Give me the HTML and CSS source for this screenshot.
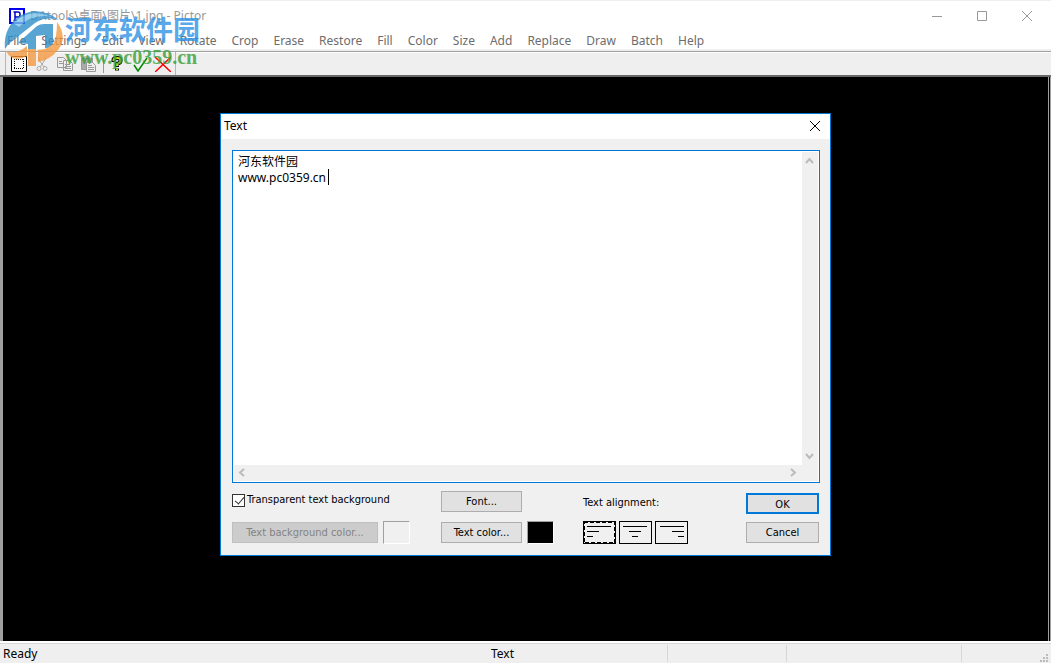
FILE: index.html
```html
<!DOCTYPE html>
<html lang="en">
<head>
    <meta charset="UTF-8">
    <title>Pictor</title>
    <link rel="stylesheet" href="styles.css">
</head>
<body>
    <header class="titlebar">
        <svg class="app-icon" width="16" height="16" viewBox="0 0 16 16">
            <rect x="1" y="1" width="14" height="14" fill="#fff" stroke="#00e" stroke-width="2"/>
            <path d="M6 13V4h3q2 0 2 2v1q0 2-2 2H6M4.500 4H7M4.500 12.500H8" fill="none" stroke="#00c" stroke-width="1.500"/>
        </svg>
        <h1>D:\tools\桌面\图片\1.jpg - Pictor</h1>
        <div class="window-buttons">
            <button aria-label="Minimize"><svg width="12" height="12"><path d="M1 6.500h10"/></svg></button>
            <button aria-label="Maximize"><svg width="12" height="12"><path d="M1.500 1.500h9v9h-9z"/></svg></button>
            <button aria-label="Close"><svg width="12" height="12"><path d="M1 1l10 10M11 1L1 11"/></svg></button>
        </div>
    </header>

    <nav class="menu">
        <button>File</button>
        <button>Settings</button>
        <button>Edit</button>
        <button>View</button>
        <button>Rotate</button>
        <button>Crop</button>
        <button>Erase</button>
        <button>Restore</button>
        <button>Fill</button>
        <button>Color</button>
        <button>Size</button>
        <button>Add</button>
        <button>Replace</button>
        <button>Draw</button>
        <button>Batch</button>
        <button>Help</button>
    </nav>

    <div class="toolbar">
        <div class="tools">
            <button aria-label="Select">
                <svg width="16" height="16"><path d="M.5.5h15v15H.5z" fill="#fff" stroke="#000"/><path d="M3 3.500h10M3 12.500h10M3.500 3v10M12.500 3v10" stroke="#000" stroke-dasharray="1 1"/></svg>
            </button>
            <button aria-label="Cut">
                <svg width="16" height="16" fill="none" stroke="#aaa"><path d="M5 1v3l5 7M11 1v3l-5 7"/><circle cx="5" cy="12.500" r="2"/><circle cx="11" cy="12.500" r="2"/></svg>
            </button>
            <button aria-label="Copy">
                <svg width="16" height="16" fill="#eee" stroke="#999"><path d="M.5 1.500h6l3 3v7h-9zM6.500 4.500h6l3 3v7h-9z"/><path d="M2 5.500h3M2 7.500h4M8 8.500h5M8 10.500h6M8 12.500h6"/></svg>
            </button>
            <button aria-label="Paste">
                <svg width="16" height="16" stroke="#999"><path d="M1.500 2.500h11v11h-11z" fill="#aaa"/><path d="M4 2.500h6V1H4z" fill="#eee"/><path d="M6.500 6.500h6l3 3v6h-9z" fill="#eee"/><path d="M8 9.500h4M8 11.500h6M8 13.500h6"/></svg>
            </button>
            <span class="separator"></span>
            <button aria-label="Help">
                <svg width="16" height="16" fill="none"><path d="M4.500 6V4Q4.500 2 8 2t3.500 2v1Q11.500 7 8 8v3M8 12.500v2" stroke="#000" stroke-width="4"/><path d="M4.500 5V4Q4.500 2 8 2t3.500 2v1Q11.500 7 8 8v2M8 12.500v1.500" stroke="#d8d820" stroke-width="2"/></svg>
            </button>
            <button aria-label="Apply">
                <svg width="16" height="16"><path d="M2 9l4 6L15 2" fill="none" stroke="#080" stroke-width="1.500"/></svg>
            </button>
            <button aria-label="Discard">
                <svg width="16" height="16"><path d="M0 1l16 15M16 1L0 16" stroke="#f00" stroke-width="1.500"/></svg>
            </button>
        </div>
    </div>

    <main class="canvas">
        <section class="dialog" role="dialog" aria-labelledby="dialog-title">
            <div class="dialog-title">
                <h2 id="dialog-title">Text</h2>
                <button aria-label="Close dialog"><svg width="12" height="12"><path d="M1 1l10 10M11 1L1 11"/></svg></button>
            </div>
            <div class="dialog-body">
                <div class="editor">
                    <textarea aria-label="Text" spellcheck="false">河东软件园
www.pc0359.cn</textarea>
                    <div class="scroll-v">
                        <svg width="9" height="8"><path d="M1 6l3.500-4L8 6"/></svg>
                        <svg width="9" height="8"><path d="M1 2l3.500 4L8 2"/></svg>
                    </div>
                    <div class="scroll-h">
                        <svg width="8" height="9"><path d="M6 1L2 4.500 6 8"/></svg>
                        <svg width="8" height="9"><path d="M2 1l4 3.500L2 8"/></svg>
                    </div>
                    <span class="caret"></span>
                </div>
                <div class="options">
                    <div class="group">
                        <label class="check"><input type="checkbox" checked>Transparent text background</label>
                        <div class="row">
                            <button class="btn wide" disabled>Text background color...</button>
                            <span class="swatch"></span>
                        </div>
                    </div>
                    <div class="group">
                        <button class="btn">Font...</button>
                        <div class="row">
                            <button class="btn">Text color...</button>
                            <span class="swatch black"></span>
                        </div>
                    </div>
                    <div class="group">
                        <span class="caption">Text alignment:</span>
                        <div class="row align">
                            <button class="selected" aria-label="Left"><svg width="33" height="23"><rect class="focus" x="1" y="1" width="31" height="21"/><path d="M4 5.500h24M4 10.500h12M4 15.500h6"/></svg></button>
                            <button aria-label="Center"><svg width="33" height="23"><path d="M4 5.500h24M10 10.500h12M13 15.500h6"/></svg></button>
                            <button aria-label="Right"><svg width="33" height="23"><path d="M5 5.500h24M17 10.500h12M23 15.500h6"/></svg></button>
                        </div>
                    </div>
                    <div class="group actions">
                        <button class="btn default">OK</button>
                        <button class="btn">Cancel</button>
                    </div>
                </div>
            </div>
        </section>
    </main>

    <footer class="status">
        <span>Ready</span>
        <span>Text</span>
        <span class="cell"></span>
        <span class="cell"></span>
        <span class="cell">
            <svg width="8" height="8" fill="#bbb"><path d="M6 0h2v2H6zM3 3h2v2H3zM6 3h2v2H6zM0 6h2v2H0zM3 6h2v2H3zM6 6h2v2H6z"/></svg>
        </span>
    </footer>

    <div class="watermark">
        <svg width="60" height="58" viewBox="0 0 60 58">
            <path d="M1 40Q-1 20 14 8 34-5 55 11q-13-4-24 3L7 33q-4 3-6 7z" fill="#2f8fca"/>
            <path d="M9 14Q26-2 48 8 28 4 15 18z" fill="#7fc4e8"/>
            <path d="M14 34l19-17q3-2 7-2h9v24h-8V26l-9 1v22h-8V35z" fill="#2f8fca"/>
            <path d="M53 13q11 15 1 28-8 10-20 12V41q16-1 18-14 1-7 1-14z" fill="#f49a42"/>
            <path d="M24 40h8v17h-8zM2 42q10 4 21-5v10q-14 8-21-5z" fill="#f49a42"/>
        </svg>
        <div>
            <p class="wm-name">河东软件园</p>
            <p class="wm-url">www.pc0359.cn</p>
        </div>
    </div>
</body>
</html>
```
FILE: styles.css
```css
* { box-sizing: border-box; }
body {
    margin: 0;
    height: 100vh;
    display: flex;
    flex-direction: column;
    background: #efefef;
    border-top: 1px solid #eee;
    font: 12px/16px "Noto Sans", "Noto Sans CJK SC", sans-serif;
    color: #000;
}
button { font: inherit; color: inherit; margin: 0; padding: 0; border: 0; background: none; }
svg { display: block; }
h1, h2, p { margin: 0; font-size: inherit; font-weight: normal; }

.titlebar { display: flex; align-items: center; height: 30px; padding: 0 18px 0 9px; gap: 5px; background: #fff; color: #999; }
.window-buttons { display: flex; gap: 33px; margin-left: auto; }
.window-buttons svg { fill: none; stroke: #999; }

.menu { display: flex; gap: 15px; height: 18px; padding-left: 7px; background: #fff; color: #6d6d6d; line-height: 20px; }

.toolbar { height: 26px; margin-top: 2px; border: solid #a0a0a0; border-width: 1px 0 2px; border-bottom-color: #696969; box-shadow: inset 0 1px #fff; }
.tools { display: flex; align-items: center; gap: 7px; width: 171px; height: 23px; margin-left: 5px; padding-left: 5px; border: solid #b5b5b5; border-width: 0 1px; }
.separator { width: 1px; height: 18px; background: #999; margin-right: -2px; }

.canvas {
    flex: 1;
    display: flex;
    justify-content: center;
    align-items: flex-start;
    padding-top: 36px;
    background: #000;
    border: solid #a0a0a0;
    border-width: 0 3px;
    border-right: 3px double #a0a0a0;
}

.dialog { width: 611px; background: #f0f0f0; border: 1px solid #0078d7; }
.dialog-title { display: flex; justify-content: space-between; align-items: center; height: 25px; padding: 0 9px 1px 3px; background: #fff; }
.dialog-title svg { stroke: #000; }
.dialog-body { padding: 11px 10px 11px 11px; }

.editor { position: relative; display: grid; grid-template-columns: 1fr 16px; grid-template-rows: 1fr 16px; height: 333px; padding: 1px; border: 1px solid #0078d7; background: #fff; }
.editor textarea { border: 0; outline: 0; resize: none; overflow: hidden; padding: 2px 4px; font: 12px/16px "Noto Sans", "Noto Sans CJK SC", sans-serif; }
.scroll-v, .scroll-h { display: flex; justify-content: space-between; align-items: center; background: #f0f0f0; }
.scroll-v { flex-direction: column; padding: 5px 1px 5px 0; }
.scroll-h { grid-column: 1 / 3; padding: 0 21px 2px 4px; }
.editor svg { fill: none; stroke: #bbb; stroke-width: 2; }
.caret { position: absolute; left: 95px; top: 18px; width: 1px; height: 16px; background: #000; }

.options { display: grid; grid-template-columns: 178px 112px 105px 1fr; column-gap: 30px; padding: 8px 1px 0 0; font: 11px/18px "DejaVu Sans Condensed", sans-serif; }
.group { display: flex; flex-direction: column; gap: 9px; padding-left: 1px; }
.group:first-child { padding-left: 0; }
.row { display: flex; align-items: center; gap: 5px; height: 23px; }
.check { display: flex; align-items: center; gap: 2px; height: 21px; padding-bottom: 3px; white-space: nowrap; }
.check input { appearance: none; width: 13px; height: 13px; margin: 0; border: 1px solid #333; background: #fff; }
.check input:checked::after { content: ""; display: block; width: 4px; height: 8px; margin: 0 0 0 4px; border: solid #333; border-width: 0 1px 1px 0; transform: rotate(40deg); }
.caption { height: 21px; line-height: 24px; }
.btn { flex-shrink: 0; width: 81px; height: 21px; padding-top: 1px; border: 1px solid #adadad; background: #e1e1e1; }
.btn.wide { width: 146px; }
.btn:disabled { background: #ccc; border-color: #bfbfbf; color: #838383; }
.btn.default { border: 2px solid #0078d7; }
.swatch { flex-shrink: 0; width: 27px; height: 23px; border: 1px solid; border-color: #a0a0a0 #fff #fff #a0a0a0; }
.swatch.black { background: #000; }
.align { gap: 3px; }
.align button { width: 33px; height: 23px; outline: 1px solid #000; outline-offset: -1px; }
.align svg { stroke: #000; }
.align .focus { fill: none; stroke-width: 2; stroke-dasharray: 4 2; }
.actions { align-items: flex-end; padding-top: 2px; gap: 8px; }
.actions .btn { width: 73px; }

.status { display: grid; grid-template-columns: 488px 1fr 119px 175px 90px; height: 20px; padding-left: 3px; border-top: 1px solid #d7d7d7; box-shadow: 0 -2px #fff; line-height: 20px; }
.cell { display: flex; align-items: flex-end; justify-content: flex-end; height: 17px; margin-top: 1px; padding-right: 3px; border-left: 1px solid #d7d7d7; }

.watermark { position: absolute; left: 4px; top: 9px; display: flex; gap: 1px; opacity: 0.8; pointer-events: none; }
.wm-name { font: bold 27px/34px "Noto Sans CJK SC", sans-serif; color: #3094e6; padding-top: 3px; }
.wm-url { font: bold 20px/22px "Liberation Serif", serif; color: #38a038; }
```
